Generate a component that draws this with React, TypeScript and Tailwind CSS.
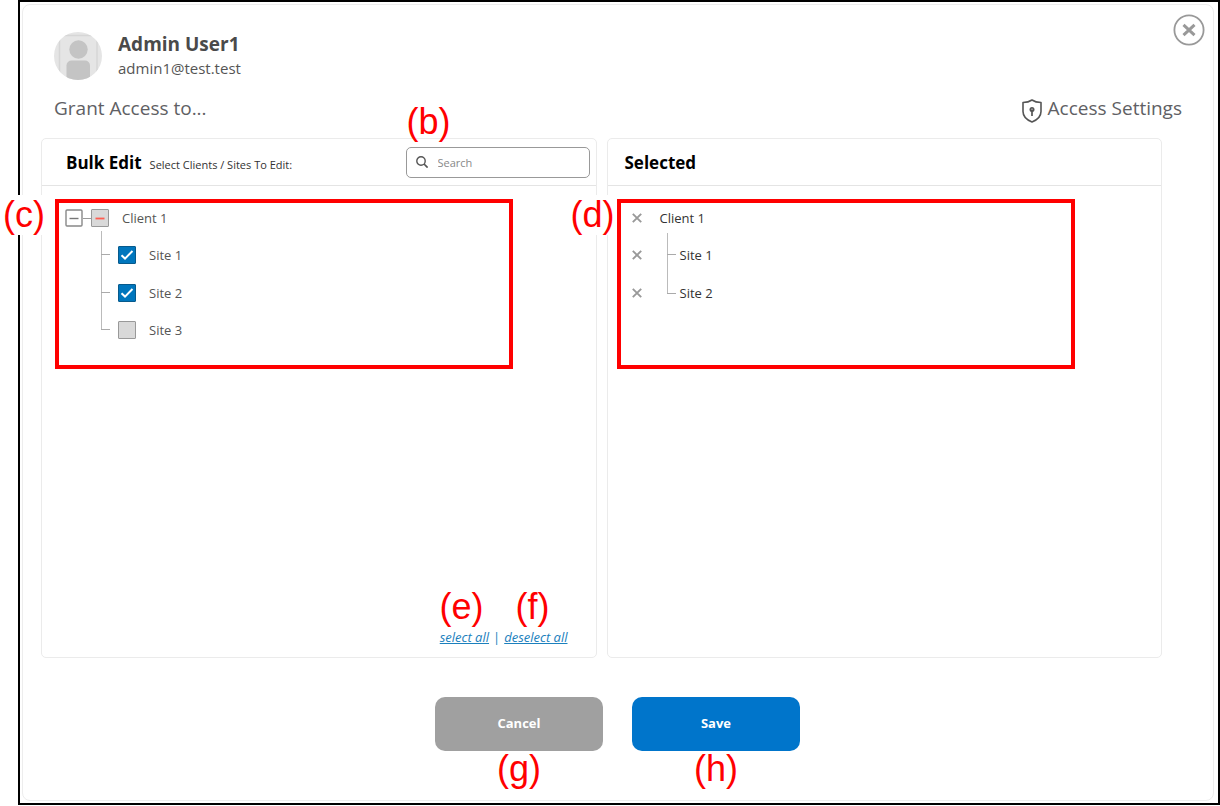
import { useState } from "react";
import type { ReactNode } from "react";

function Callout({ letter, className }: { letter: string; className: string }) {
  return (
    <span
      className={`pointer-events-none absolute z-10 h-10 font-['Liberation_Sans',sans-serif] text-[36px] leading-10 font-normal whitespace-nowrap text-[#ff0000] ${className}`}
    >
      ({letter})
    </span>
  );
}

function Highlight() {
  return <span className="pointer-events-none absolute inset-0 border-4 border-[#ff0000]" />;
}

function Avatar() {
  return (
    <svg viewBox="0 0 48 48" className="size-12" aria-hidden="true">
      <defs>
        <clipPath id="avatar-circle">
          <circle cx="24" cy="24" r="24" />
        </clipPath>
      </defs>
      <g clipPath="url(#avatar-circle)">
        <rect width="48" height="48" fill="#e5e5e5" />
        <path d="M5.500 0V48M43 0V48" stroke="#d6d6d6" strokeWidth="1.500" />
        <path d="M5 3.500H43" stroke="#d6d6d6" strokeWidth="1.500" />
        <circle cx="24.500" cy="17.500" r="9.200" fill="#c4c4c4" />
        <path d="M12.500 48V33.500a5 5 0 0 1 5-5h13.500a5 5 0 0 1 5 5V48z" fill="#c4c4c4" />
      </g>
    </svg>
  );
}

function ShieldIcon() {
  return (
    <svg viewBox="0 0 20 24" className="h-6 w-5" fill="none" stroke="#555" strokeWidth="1.600" aria-hidden="true">
      <path d="M10 1C7.600 2.600 4.500 3.400 1 3.500V12.500C1 17.500 5 21 10 23C15 21 19 17.500 19 12.500V3.500C15.500 3.400 12.400 2.600 10 1Z" strokeLinejoin="round" />
      <circle cx="10" cy="10.500" r="2.500" fill="#555" stroke="none" />
      <path d="M10 10.500V17" strokeWidth="1.700" />
      <circle cx="10" cy="10.300" r="0.700" fill="#ccc" stroke="none" />
    </svg>
  );
}

function CheckBox({ id, checked, mixed, onChange }: { id: string; checked: boolean; mixed?: boolean; onChange: () => void }) {
  return (
    <span className="grid size-[18px] shrink-0">
      <input
        id={id}
        type="checkbox"
        checked={checked}
        onChange={onChange}
        className="col-start-1 row-start-1 size-[18px] appearance-none rounded-[1px] border border-[#999] bg-[#d9d9d9] checked:border-[#075a8c] checked:bg-[#0076bd]"
      />
      <svg viewBox="0 0 18 18" className="pointer-events-none col-start-1 row-start-1 size-[18px]" fill="none" aria-hidden="true">
        {checked && <path d="M3.500 9.300L7 12.600L14.500 5" stroke="#fff" strokeWidth="2" />}
        {mixed && <path d="M4.500 9.500H13.500" stroke="#ff5c50" strokeWidth="1.800" />}
      </svg>
    </span>
  );
}

function Panel({ header, children }: { header: ReactNode; children: ReactNode }) {
  return (
    <section className="relative flex flex-1 flex-col rounded-[5px] border border-[#ebebeb] bg-white">
      <header className="flex h-[47px] items-center border-b border-[#e4e4e4]">{header}</header>
      <div className="flex min-h-[471px] flex-col pt-[13px]">{children}</div>
    </section>
  );
}

export default function App() {
  const [sites, setSites] = useState([
    { name: "Site 1", on: true },
    { name: "Site 2", on: true },
    { name: "Site 3", on: false },
  ]);
  const all = sites.every((s) => s.on);
  const some = sites.some((s) => s.on);
  const setAll = (on: boolean) => setSites(sites.map((s) => ({ ...s, on })));
  const toggle = (name: string) => setSites(sites.map((s) => (s.name === name ? { ...s, on: !s.on } : s)));
  const picked = sites.filter((s) => s.on);

  return (
    <div className="bg-white pl-[18px] font-['Open_Sans',sans-serif]">
      <div className="border-2 border-black py-0.5 pr-1 pl-0.5">
        <main className="relative rounded-lg border border-[#ededed] bg-white pr-[51px] pb-[49px] pl-[18px]">
          <button type="button" aria-label="Close" className="absolute top-[9px] right-2 size-8">
            <svg viewBox="0 0 32 32" fill="none" stroke="#999" aria-hidden="true">
              <circle cx="16" cy="16" r="14.600" strokeWidth="1.800" />
              <path d="M10.500 10.800L21.500 21.200M21.500 10.800L10.500 21.200" strokeWidth="3" />
            </svg>
          </button>

          <div className="flex items-center gap-4 pt-[27px] pl-[13px]">
            <Avatar />
            <div>
              <h1 className="text-[19px] leading-6 font-bold text-[#4a4a4a]">Admin User1</h1>
              <p className="text-[15px] leading-6 text-[#555]">admin1@test.test</p>
            </div>
          </div>

          <div className="-mr-5 flex h-[58px] items-center justify-between pb-0.5 pl-[13px] text-[19px] text-[#606064]">
            <h2>Grant Access to...</h2>
            <a href="#settings" className="flex items-center gap-1.5">
              <span className="pt-[5px]">
                <ShieldIcon />
              </span>
              Access Settings
            </a>
          </div>

          <div className="flex gap-2.5">
            <Panel
              header={
                <div className="flex flex-1 items-center justify-between pr-1.5 pl-6">
                  <div className="flex items-baseline gap-2 pt-0.5">
                    <h3 className="text-[17px] font-bold text-black">Bulk Edit</h3>
                    <p className="text-[11px] text-[#333]">Select Clients / Sites To Edit:</p>
                  </div>
                  <label className="relative flex h-[31px] w-[184px] items-center gap-2.5 rounded-[5px] border border-[#999] pl-[9px]">
                    <Callout letter="b" className="-top-[46px] left-0" />
                    <svg viewBox="0 0 12 12" className="size-3 shrink-0" fill="none" stroke="#555" aria-hidden="true">
                      <circle cx="5" cy="5" r="4.200" strokeWidth="1.400" />
                      <path d="M8 8L11.600 11.600" strokeWidth="1.700" />
                    </svg>
                    <input
                      type="search"
                      aria-label="Search"
                      placeholder="Search"
                      className="w-full min-w-0 bg-transparent pt-0.5 text-[11px] outline-none placeholder:text-[#888]"
                    />
                  </label>
                </div>
              }
            >
              <div className="relative ml-[13px] h-[170px] w-[458px]">
                <Callout letter="c" className="-top-1 -left-[55px] w-[48px] bg-white pl-[3px]" />
                <Highlight />
                <svg viewBox="0 0 70 150" className="pointer-events-none absolute top-0 left-0 h-[150px] w-[70px]" fill="none" aria-hidden="true">
                  <path d="M28 19.500H37" stroke="#999" />
                  <path d="M46.500 32V131" stroke="#bbb" />
                  <path d="M46 55.500H55M46 93.500H55M46 130.500H55" stroke="#aaa" />
                </svg>
                <ul className="grid h-[150px] auto-rows-fr text-[13px] text-[#555]">
                  <li className="flex items-center pl-2.5">
                    <button type="button" aria-label="Collapse Client 1" className="mr-2 size-[18px]">
                      <svg viewBox="0 0 18 18" fill="none" aria-hidden="true">
                        <rect x="1" y="1" width="16" height="16" rx="1" stroke="#888" strokeWidth="1.400" />
                        <path d="M4.500 9.500H13.500" stroke="#777" strokeWidth="1.400" />
                      </svg>
                    </button>
                    <CheckBox id="client" checked={all} mixed={some && !all} onChange={() => setAll(!all)} />
                    <label htmlFor="client" className="pt-px pl-[13px]">
                      Client 1
                    </label>
                  </li>
                  {sites.map((s) => (
                    <li key={s.name} className="flex items-center pl-[63px]">
                      <CheckBox id={s.name} checked={s.on} onChange={() => toggle(s.name)} />
                      <label htmlFor={s.name} className="pt-px pl-[13px]">
                        {s.name}
                      </label>
                    </li>
                  ))}
                </ul>
              </div>
              <div className="relative mt-auto flex justify-end gap-1 pr-[28px] pb-[11px] text-[13px] leading-[18px] text-[#1b80bd]">
                <Callout letter="e" className="-top-[41px] right-[112px]" />
                <Callout letter="f" className="-top-[41px] right-[46px]" />
                <button type="button" onClick={() => setAll(true)} className="italic underline">
                  select all
                </button>
                <span>|</span>
                <button type="button" onClick={() => setAll(false)} className="italic underline">
                  deselect all
                </button>
              </div>
            </Panel>

            <Panel header={<h3 className="pt-0.5 pl-[17px] text-[17px] font-bold text-black">Selected</h3>}>
              <div className="relative ml-[9px] h-[170px] w-[458px]">
                <Callout letter="d" className="-top-1 -left-[46px] w-[46px] bg-white" />
                <Highlight />
                <svg viewBox="0 0 70 150" className="pointer-events-none absolute top-0 left-0 h-[150px] w-[70px]" fill="none" aria-hidden="true">
                  <path d="M50.500 34V94" stroke="#bbb" />
                  <path d="M50 55.500H59M50 94.500H59" stroke="#aaa" />
                </svg>
                <ul className="grid h-[150px] grid-rows-4 text-[13px] text-[#333]">
                  {["Client 1", ...picked.map((s) => s.name)].map((name, i) => (
                    <li key={name} className="flex items-center pl-[15px]">
                      <button
                        type="button"
                        aria-label={`Remove ${name}`}
                        onClick={() => (i === 0 ? setAll(false) : toggle(name))}
                        className="size-2.5"
                      >
                        <svg viewBox="0 0 10 10" fill="none" stroke="#999" strokeWidth="1.900" aria-hidden="true">
                          <path d="M0.800 0.800L9.200 9.200M9.200 0.800L0.800 9.200" />
                        </svg>
                      </button>
                      <span className={i === 0 ? "pt-px pl-[18px]" : "pt-px pl-[38px]"}>{name}</span>
                    </li>
                  ))}
                </ul>
              </div>
            </Panel>
          </div>

          <div className="-mr-8 flex justify-center gap-[29px] pt-[39px] text-[13px] font-bold text-white">
            <div className="relative">
              <button type="button" className="h-[54px] w-[168px] rounded-[10px] bg-[#a0a0a0]">
                Cancel
              </button>
              <Callout letter="g" className="top-[52px] left-[62px]" />
            </div>
            <div className="relative">
              <button type="button" className="h-[54px] w-[168px] rounded-[10px] bg-[#0075cb]">
                Save
              </button>
              <Callout letter="h" className="top-[52px] left-[62px]" />
            </div>
          </div>
        </main>
      </div>
    </div>
  );
}
